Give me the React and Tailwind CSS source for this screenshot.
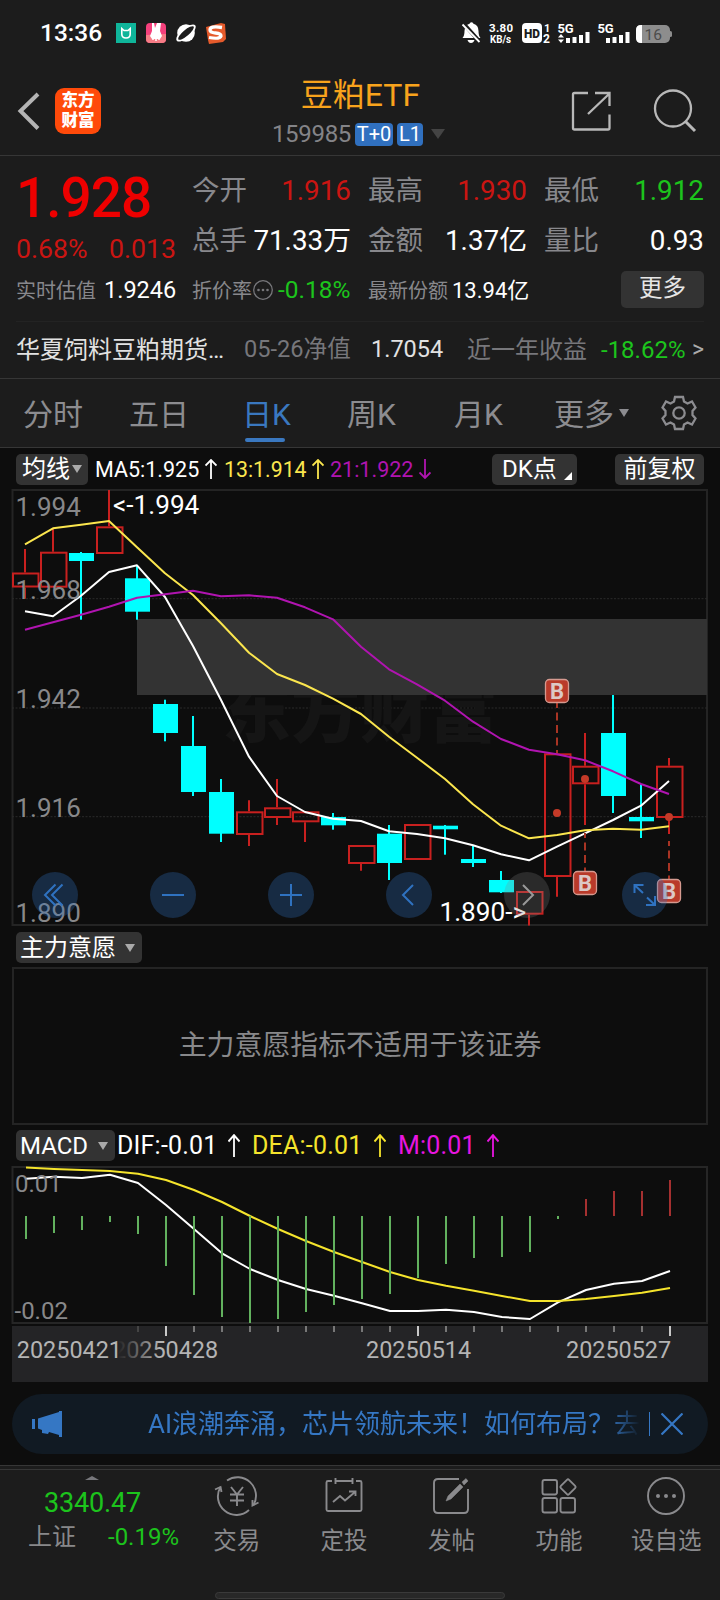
import React from 'react'

const UP = '#c8201f'
const DOWN = '#00ffff'

// [type, high, bodyTop, bodyBottom, low]
const CANDLES = [
  ['up', 549, 572.5, 587.5, 598.7],
  ['up', 528.5, 551.7, 587.7, 587.7],
  ['down', 552, 553, 561, 619.7],
  ['up', 490, 526.3, 554, 554],
  ['down', 565, 578.3, 611.7, 619.7],
  ['down', 699.7, 704, 733, 741.3],
  ['down', 716, 746, 792, 796],
  ['down', 779, 792, 833.7, 842],
  ['up', 800.3, 811.3, 835, 846],
  ['up', 779, 807.3, 818, 825],
  ['up', 811.3, 811.3, 822.3, 842],
  ['down', 813, 817, 825.3, 829.7],
  ['up', 845, 845, 864, 870.7],
  ['down', 825, 833.7, 863, 880],
  ['up', 824, 824, 860, 860],
  ['down', 825, 825.7, 829.3, 854.7],
  ['down', 845.7, 859, 863, 867],
  ['down', 871, 880, 892.3, 893],
  ['up', 891, 891, 914.7, 925.5],
  ['up', 750, 753.3, 877, 896.7],
  ['up', 733, 765.7, 784.3, 825],
  ['down', 695, 733, 796, 813],
  ['down', 784, 817, 821.3, 838],
  ['up', 758, 765.7, 818, 834],
]

const MA5 = [611.3, 616.3, 595.7, 572, 565.3, 597, 646, 700, 756.7, 796, 812, 818.7, 821, 831.3, 834, 838.3, 845.3, 854.3, 860.3, 846.7, 833.3, 820, 805.7, 781]
const MA13 = [544.3, 528.3, 524.7, 521, 547.3, 573.3, 595, 623.3, 652.7, 674, 685, 698.7, 714, 736.7, 757.7, 779, 804.3, 825.7, 838.3, 835, 830.3, 828.7, 829.7, 826.3]
const MA21 = [629.7, 622.3, 614.7, 606.7, 597.7, 594.3, 590.7, 596.3, 595.3, 597.7, 607.3, 619.3, 646.7, 669.3, 684.3, 700.7, 721.7, 739, 749.7, 754.3, 760.3, 771.3, 784, 794]

const MACD = [1239, 1233, 1230, 1222, 1234, 1266, 1295, 1317, 1323, 1319, 1312, 1305, 1299, 1294, 1278, 1264, 1258, 1257, 1252, 1219, 1199, 1191, 1191, 1180]
const DIF = [1178.7, 1176.7, 1178, 1174.7, 1183, 1205, 1229, 1253.3, 1269, 1280, 1289, 1295.7, 1303.3, 1311, 1311, 1309.7, 1312, 1317, 1319, 1302.3, 1290, 1283.7, 1281, 1271]
const DEA = [1167.5, 1169, 1170, 1171, 1173.7, 1180, 1190, 1202, 1216, 1229, 1241, 1252, 1262, 1272, 1280, 1285.7, 1290.7, 1296, 1301, 1301, 1299, 1296, 1292.7, 1288]

const line = (ys, x0) => ys.map((y, i) => `${x0 + i * 28},${y}`).join(' ')

function Caret({ className }) {
  return (
    <svg viewBox="0 0 10 8" preserveAspectRatio="none" className={className} fill="currentColor">
      <path d="M0 0h10L5 8z" />
    </svg>
  )
}

function Arrow({ down, className }) {
  return (
    <svg viewBox="0 1 12 20" preserveAspectRatio="none" className={className} fill="none" stroke="currentColor" strokeWidth="1.8">
      <path d={down ? 'M6 1v19M.5 14.500l5.500 5.500 5.500-5.500' : 'M6 21V2M.5 7.500L6 2l5.500 5.500'} />
    </svg>
  )
}

function StatusBar() {
  return (
    <div className="flex h-[66px] shrink-0 items-center pl-[40px] pr-[48px] text-white">
      <span className="w-[76px] pt-px text-[24.5px] font-medium leading-none">13:36</span>
      <svg width="112" height="22" viewBox="0 0 112 22">
        <rect y="1" width="20" height="20" fill="#0fb59a" />
        <path d="M5.800 6.500v5.500q0 4 4.200 4t4.200-4v-5.500l-2.200 2h-4z" fill="none" stroke="#fff" strokeWidth="1.600" />
        <rect x="30" y="1" width="20" height="20" rx="4" fill="#f5407c" />
        <path d="M30 13l20-1v5q0 4-4 4H34q-4 0-4-4z" fill="#f77c86" />
        <path d="M36 1h2l1 5 2-5h4l-1 8 2 5-2 3h-8l-2-3 2-5z" fill="#fff" />
        <path d="M37 16v2M40 16v3M43 16v2" stroke="#fff" strokeWidth="1.500" />
        <circle cx="70" cy="11" r="8.800" fill="#fff" />
        <ellipse cx="70" cy="11" rx="12" ry="4.800" fill="#fff" transform="rotate(-40 70 11)" />
        <ellipse cx="70" cy="11" rx="10" ry="3" fill="#1c1c1c" transform="rotate(-40 70 11)" />
        <path d="M90 5l15-4 4 1 1 15-3 3-14 2-1-4z" fill="#e55a2b" />
        <path d="M106 5.500q-12-2-12 2.500 0 2.500 5.500 3t5.500 3q-1 3.500-12 1.500" fill="none" stroke="#fff" strokeWidth="3.300" />
      </svg>
      <svg className="ml-auto" width="212" height="24" viewBox="460 21 212 24" fill="#fff">
        <path d="M464 38q2-2 2-7 0-6 5-7.300Q473 21 475 23.700q5 1.300 5 7.300 0 5 2 7zM469 40h7q-1 3-3.500 3T469 40z" transform="translate(-1.500 0)" />
        <path d="M463 23l17 19" stroke="#1c1c1c" strokeWidth="4" />
        <path d="M462.500 24.500l17 17.500" stroke="#fff" strokeWidth="1.800" />
        <g fontFamily="Roboto" fontWeight="700">
          <text x="489" y="32" fontSize="11.500" textLength="24">3.80</text>
          <text x="490" y="42.500" fontSize="10" textLength="21" lengthAdjust="spacingAndGlyphs">KB/s</text>
          <rect x="522" y="23" width="20" height="20" rx="4" />
          <text x="524" y="38" fontSize="13.500" textLength="16" lengthAdjust="spacingAndGlyphs" fill="#1c1c1c" fontWeight="900">HD</text>
          <text x="544" y="31.500" fontSize="11">1</text>
          <text x="543" y="43" fontSize="12">2</text>
          <text x="557.500" y="32.500" fontSize="13" textLength="16">5G</text>
          <text x="597.500" y="32.500" fontSize="13" textLength="16">5G</text>
        </g>
        <path d="M558 37.500l3-3.500 3 3.500zM558 39.500l3 3.500 3-3.500z" />
        <path d="M566 38h4v5h-4zM572.500 37h4v6h-4zM579 35h4v8h-4zM585.500 32h4v11h-4z" />
        <path d="M606 38h4v5h-4zM612.500 37h4v6h-4zM619 35h4v8h-4zM625.500 32h4v11h-4z" />
        <rect x="636" y="25" width="34" height="18" rx="5" fill="#8d8d8d" />
        <path d="M641 25h1v18h-1q-5 0-5-5v-8q0-5 5-5z" />
        <rect x="669" y="31" width="3" height="6" rx="1.500" fill="#8d8d8d" />
        <text x="644.500" y="40" fontFamily="Roboto" fontSize="15.500" fill="#4c4c4c">16</text>
      </svg>
    </div>
  )
}

function Header() {
  return (
    <header className="flex h-[90px] shrink-0 border-b border-[#363636] pl-[17px] pr-[22px]">
      <svg className="mt-[26px]" width="24" height="38" viewBox="0 0 24 38" fill="none" stroke="#b4b4b4" strokeWidth="4">
        <path d="M21 2L3.500 19 21 36.500" />
      </svg>
      <div className="ml-[14px] mt-[22px] h-[46px] w-[46px] rounded-[9px] bg-[#ff4a0a] pt-[3px] text-center text-[16.5px] font-black leading-[19.5px] text-white">
        东方<br />财富
      </div>
      <div className="flex w-[519px] flex-col items-center">
        <h1 className="mt-[12px] text-[32px] leading-[34px] text-[#f8a31c]">豆粕ETF</h1>
        <div className="-ml-[4px] mt-[10px] flex items-center text-[24px] leading-[24px] text-[#848488]">
          <span className="tracking-[-0.3px]">159985</span>
          <span className="ml-[4px] flex h-[23px] w-[38px] items-center justify-center rounded-[4px] bg-[#3070bf] text-[20px] text-white">T+0</span>
          <span className="ml-[4px] flex h-[23px] w-[26px] items-center justify-center rounded-[4px] bg-[#3070bf] text-[20px] text-white">L1</span>
          <Caret className="ml-[8px] h-[10px] w-[14px] text-[#444]" />
        </div>
      </div>
      <svg className="-ml-[52px] mt-[22px] shrink-0" width="130" height="46" viewBox="568 88 130 46" fill="none" stroke="#b8b8b8" strokeWidth="2.3">
        <path d="M588 93h-13.500q-1.500 0-1.500 1.500V128q0 1.500 1.500 1.500H608q1.500 0 1.500-1.500v-13.500M595 93h14.500v13M609 94l-21 20" />
        <circle cx="673" cy="108.500" r="18" />
        <path d="M685 121l10 10" strokeWidth="3" />
      </svg>
    </header>
  )
}

function Stat({ label, value, color = 'text-white' }) {
  return (
    <div className="flex items-center justify-between whitespace-nowrap">
      <span className="text-[27.500px] text-[#88888c]">{label}</span>
      <span className={`text-[27.800px] ${color}`}>{value}</span>
    </div>
  )
}

function Quote() {
  return (
    <section className="h-[223px] shrink-0 border-b border-[#363636] px-[16px] leading-none">
      <div className="flex h-[108px]">
        <div className="w-[176px]">
          <div className="flex h-[84px] items-center text-[55px] font-medium tracking-[-1px] text-[#ee0000]">1.928</div>
          <div className="-mt-[6px] flex h-[30px] items-center justify-between pr-[16px] text-[26.700px] text-[#cb1512]">
            <span>0.68%</span>
            <span>0.013</span>
          </div>
        </div>
        <div className="grid h-[100px] flex-1 grid-cols-[159px_159px_160px] grid-rows-[50px_50px] gap-x-[17px] pt-[10px]">
          <Stat label="今开" value="1.916" color="text-[#cb1512]" />
          <Stat label="最高" value="1.930" color="text-[#cb1512]" />
          <Stat label="最低" value="1.912" color="text-[#1cc41c]" />
          <Stat label="总手" value="71.33万" />
          <Stat label="金额" value="1.37亿" />
          <Stat label="量比" value="0.93" />
        </div>
      </div>
      <div className="flex h-[58px] items-center whitespace-nowrap border-b border-[#232323] pb-[4px] text-[24.500px] text-white">
        <span className="w-[88px] text-[20px] text-[#88888c]">实时估值</span>
        <span className="w-[88px] text-[23.500px]">1.9246</span>
        <span className="text-[20px] text-[#88888c]">折价率</span>
        <svg width="22" height="22" viewBox="0 0 22 22" fill="#77777b">
          <circle cx="11" cy="10" r="9.300" fill="none" stroke="#77777b" strokeWidth="1.300" />
          <circle cx="6.500" cy="10" r="1.300" />
          <circle cx="11" cy="10" r="1.300" />
          <circle cx="15.500" cy="10" r="1.300" />
        </svg>
        <span className="ml-[4px] w-[90px] text-[#1cc41c]">-0.18%</span>
        <span className="w-[84px] text-[20px] text-[#88888c]">最新份额</span>
        <span className="text-[22px]">13.94亿</span>
        <button className="mb-[3px] ml-auto h-[37px] w-[83px] rounded-[5px] bg-[#333] text-[23.500px] text-[#e6e6e6]">更多</button>
      </div>
      <div className="flex h-[55px] items-center whitespace-nowrap text-[24px] text-[#e2e2e2]">
        <span className="w-[228px]">华夏饲料豆粕期货…</span>
        <span className="w-[127px] text-[23.600px] text-[#77777b]">05-26净值</span>
        <span className="w-[96px] text-[23.500px]">1.7054</span>
        <span className="w-[134px] text-[#77777b]">近一年收益</span>
        <span className="text-[#1cc41c]">-18.62%</span>
        <span className="ml-auto text-[23px] text-[#aaa]">&gt;</span>
      </div>
    </section>
  )
}

function Tabs() {
  return (
    <nav className="flex h-[69px] shrink-0 items-center whitespace-nowrap border-b border-[#363636] pl-[23px] text-[30px] leading-none text-[#8c8c90]">
      <span className="w-[106px] pt-[4px]">分时</span>
      <span className="w-[113px] pt-[4px]">五日</span>
      <span className="flex h-full w-[105px] flex-col pt-[21px] text-[#3a78c0]">
        日K
        <i className="ml-[3px] mt-[8px] h-[4px] w-[40px] rounded-full bg-[#3a78c0]" />
      </span>
      <span className="w-[107px] pt-[4px]">周K</span>
      <span className="w-[100px] pt-[4px]">月K</span>
      <span className="w-[59px] pt-[4px]">更多</span>
      <Caret className="ml-[6px] h-[8px] w-[10px]" />
      <svg className="ml-[32px]" width="36" height="36" viewBox="-18 -18 36 36" fill="none" stroke="#8c8c90" strokeWidth="2.300">
        <path d="M-4-16h8l1 4.500 3.500 2 4.500-2 3.500 6-3 3.500v4l3 3.500-3.500 6-4.500-2-3.500 2-1 4.500h-8l-1-4.500-3.500-2-4.500 2-3.500-6 3-3.500v-4l-3-3.500 3.500-6 4.500 2 3.500-2z" />
        <circle r="5.700" />
      </svg>
    </nav>
  )
}

function Badge({ x, y }) {
  return (
    <g>
      <rect x={x - 11.5} y={y - 11.5} width="23" height="23" rx="4" fill="#b93a2a" stroke="#d59a90" strokeWidth="1.300" />
      <text x={x} y={y + 8} textAnchor="middle" fontSize="22" fontWeight="700" fill="#dcc8c6">B</text>
    </g>
  )
}

function KChart() {
  return (
    <svg className="block shrink-0" width="720" height="441" viewBox="0 487 720 441" fontFamily="Roboto">
      <rect x="12.500" y="490" width="694.500" height="435" fill="none" stroke="#242424" strokeWidth="2" />
      {[598.7, 708, 816.7].map((y) => (
        <path key={y} d={`M12 ${y}H708`} stroke="#2a2a2a" strokeDasharray="2 1.500" />
      ))}
      <text x="222" y="737" fontSize="69" fontWeight="900" fill="#151515" fontFamily="'Noto Sans CJK SC', sans-serif">东方财富</text>
      <path d="M137 619h570v76H137z" fill="#333" />
      {CANDLES.map(([type, high, top, bottom, low], i) => {
        const x = 25 + i * 28
        return type === 'up' ? (
          <g key={x} fill="none" stroke={UP} strokeWidth="2">
            <path d={`M${x} ${high}V${top}M${x} ${bottom}V${low}`} />
            <rect x={x - 12} y={top + 1} width="25.500" height={bottom - top - 2} />
          </g>
        ) : (
          <g key={x} fill={DOWN}>
            <rect x={x - 1} y={high} width="2" height={low - high} />
            <rect x={x - 12} y={top} width="25" height={bottom - top} />
          </g>
        )
      })}
      <g fill="none" strokeWidth="2" strokeLinejoin="round">
        <polyline points={line(MA5, 25)} stroke="#fff" />
        <polyline points={line(MA13, 25)} stroke="#fbe64e" />
        <polyline points={line(MA21, 25)} stroke="#b014b0" />
      </g>
      <path d="M557 703V753M585 833V872M669 841V879" stroke="#a93424" strokeWidth="2" strokeDasharray="8 4.500" strokeDashoffset="3" />
      <g fill="#c43a28">
        <circle cx="557" cy="813" r="4" />
        <circle cx="585" cy="779" r="4" />
        <circle cx="669" cy="817" r="4" />
      </g>
      <Badge x={557} y={691} />
      <Badge x={585} y={883} />
      <Badge x={669} y={891} />
      <g fontSize="26" fill="#88888a">
        <text x="15.500" y="516">1.994</text>
        <text x="15.500" y="599">1.968</text>
        <text x="15.500" y="708">1.942</text>
        <text x="15.500" y="817">1.916</text>
        <text x="15.500" y="922">1.890</text>
      </g>
      <g fontSize="26.200" fill="#fff">
        <text x="113" y="514">&lt;-1.994</text>
        <text x="439.500" y="920.700">1.890-&gt;</text>
      </g>
      {[55, 173, 291, 409, 645].map((x) => (
        <circle key={x} cx={x} cy="895" r="23" fill="#2f72c0" fillOpacity="0.300" />
      ))}
      <circle cx="527" cy="895" r="23" fill="#828282" fillOpacity="0.250" />
      <g fill="none" stroke="#2f72c0" strokeWidth="2">
        <path d="M55.500 884.500L45 895l10.500 10.500M62.500 884.500L52 895l10.500 10.500" />
        <path d="M162 895h22M280 895h22M291 884v22" />
        <path d="M413 885l-10 10 10 10" />
        <path d="M634.500 893v-8h9M635 885.500l8 7.500M655 896v9h-9M655 905l-8-7.500" />
        <path d="M523 885l10 10-10 10" stroke="#999" />
      </g>
    </svg>
  )
}

function MacdChart() {
  return (
    <svg className="block shrink-0" width="720" height="218" viewBox="0 1165 720 218" fontFamily="Roboto">
      <defs>
        <linearGradient id="dateFade" gradientUnits="userSpaceOnUse" x1="118" x2="160" y1="0" y2="0">
          <stop offset="0" stopColor="#b4b4b4" stopOpacity="0" />
          <stop offset="1" stopColor="#b4b4b4" />
        </linearGradient>
      </defs>
      <rect x="12.500" y="1167" width="694.500" height="156" fill="none" stroke="#262626" strokeWidth="2" />
      <g fill="none" strokeWidth="2" strokeLinejoin="round">
        <polyline points={line(DIF, 26)} stroke="#fff" />
        <polyline points={line(DEA, 26)} stroke="#f5e42c" />
      </g>
      {MACD.map((y, i) => (
        <path key={i} d={`M${26 + i * 28} 1216V${y}`} stroke={y > 1216 ? '#62b15e' : '#a53030'} strokeWidth="2" />
      ))}
      <g fontSize="24" fill="#88888a">
        <text x="15" y="1191.700">0.01</text>
        <text x="14.500" y="1319">-0.02</text>
      </g>
      <path d="M12 1326h696v56H12z" fill="#242426" />
      {MACD.map((_, i) => {
        if (i < 4) return null
        const major = i === 5 || i === 14 || i === 23
        return (
          <path key={i} d={`M${26 + i * 28} 1326v${major ? 10 : 6}`} stroke={major ? '#c8c8c8' : i === 4 ? '#444' : '#777'} strokeWidth="2" />
        )
      })}
      <g fontSize="23.400" fill="#b4b4b4">
        <text x="16.800" y="1357.700">20250421</text>
        <text x="113" y="1357.700" fill="url(#dateFade)">20250428</text>
        <text x="366" y="1357.700">20250514</text>
        <text x="566" y="1357.700">20250527</text>
      </g>
    </svg>
  )
}

function Charts() {
  return (
    <section className="flex h-[935px] shrink-0 flex-col bg-[#0d0d0d] leading-none text-white">
      <div className="flex h-[39px] items-center whitespace-nowrap px-[16px] pt-[3px] text-[21.500px]">
        <div className="flex h-[31px] w-[72px] items-center rounded-[5px] bg-[#333] pl-[6px] text-[24px]">
          均线
          <Caret className="ml-[2px] h-[8px] w-[10px] shrink-0 text-[#aaa]" />
        </div>
        <span className="ml-[7px] w-[109.500px] pt-px">MA5:1.925</span>
        <Arrow className="h-[20px] w-[12px]" />
        <span className="ml-[7.500px] w-[88px] pt-px text-[21.300px] text-[#fbe64e]">13:1.914</span>
        <Arrow className="h-[20px] w-[12px] text-[#fbe64e]" />
        <span className="ml-[6px] w-[89px] pt-px text-[#b014b0]">21:1.922</span>
        <Arrow down className="h-[20px] w-[12px] text-[#b014b0]" />
        <div className="ml-auto flex h-[31px] w-[85px] items-center rounded-[5px] bg-[#333] pl-[10px] text-[24px]">
          DK点
          <svg className="ml-[6px] mt-[14px] shrink-0" width="9" height="8" viewBox="0 0 9 8"><path d="M9 0v8H1z" fill="#fff" /></svg>
        </div>
        <div className="ml-[38px] flex h-[31px] w-[89px] items-center justify-center rounded-[5px] bg-[#333] text-[24px]">前复权</div>
      </div>
      <KChart />
      <div className="flex h-[39px] shrink-0 items-center pl-[16px]">
        <div className="flex h-[31px] w-[126px] items-center rounded-[5px] bg-[#333] pl-[4px] text-[24px]">
          主力意愿
          <Caret className="ml-[9px] h-[8px] w-[10px] text-[#aaa]" />
        </div>
      </div>
      <div className="mx-[12px] flex h-[158px] shrink-0 items-center justify-center border-2 border-[#242424] text-[27.900px] text-[#88888a]">
        主力意愿指标不适用于该证券
      </div>
      <div className="flex h-[40px] shrink-0 items-center whitespace-nowrap pl-[16px] pt-[1px] text-[25px] tracking-[0.2px]">
        <div className="flex h-[31px] w-[99px] items-center rounded-[5px] bg-[#333] pl-[4px] text-[24px] tracking-normal">
          MACD
          <Caret className="ml-[10px] h-[8px] w-[10px] text-[#aaa]" />
        </div>
        <span className="ml-[2px] w-[111px]">DIF:-0.01</span>
        <Arrow className="h-[23px] w-[12px]" />
        <span className="ml-[12px] w-[122px] text-[#f5e42c]">DEA:-0.01</span>
        <Arrow className="h-[23px] w-[12px] text-[#f5e42c]" />
        <span className="ml-[12px] w-[89px] text-[#e815e0]">M:0.01</span>
        <Arrow className="h-[23px] w-[12px] text-[#e815e0]" />
      </div>
      <MacdChart />
    </section>
  )
}

function Banner() {
  return (
    <div className="h-[82px] shrink-0 bg-[#0d0d0d] px-[12px] pt-[11px]">
      <div className="flex h-[60px] items-center rounded-full bg-[#111a23] pl-[20px] text-[26px] leading-none text-[#3577c4]">
        <svg className="shrink-0" width="30" height="28" viewBox="0 0 30 28" fill="currentColor">
          <path d="M0 9h3v10H0zM6 8.500L27 2V1h3v26h-3v-2l-10-3-1 2-6-1v-3l-4-1.500z" />
        </svg>
        <span className="ml-[86px] w-[500px] shrink-0 whitespace-nowrap leading-[34px] [mask-image:linear-gradient(to_right,#000_460px,transparent_492px)]">
          AI浪潮奔涌，芯片领航未来！如何布局？去
        </span>
        <i className="ml-[1px] h-[24px] w-px shrink-0 bg-[#3577c4]" />
        <svg className="ml-[11px] shrink-0" width="22" height="22" viewBox="0 0 22 22" stroke="currentColor" strokeWidth="2.200">
          <path d="M.5.5l21 21M21.500.5l-21 21" />
        </svg>
      </div>
    </div>
  )
}

const NAV = [
  {
    label: '交易',
    icon: (
      <>
        <path d="M-10-15.500A18.500 18.500 0 0 1 16.500 9M-16.500-9A18.500 18.500 0 0 0 12 14" />
        <path d="M-22-6.500l5.500-2.500 1 5M15.500 4v5.500l6-3" />
        <path d="M-6-9l6 7.500L6-9M0-1.500V10M-7-1.500H7M-7 4.500H7" />
      </>
    ),
  },
  {
    label: '定投',
    icon: (
      <>
        <path d="M-12-15h-4q-1.500 0-1.500 1.500v27q0 1.500 1.500 1.500h32q1.500 0 1.500-1.500v-27Q17.500-15 16-15h-4M-8-15H8M-8.500-18v6M8.500-18v6" />
        <path d="M-11 6l7-6 5 4.500L11-4M5-4.500h6.500V0" />
      </>
    ),
  },
  {
    label: '发帖',
    icon: (
      <>
        <path d="M8-17h-21q-4 0-4 4v26q0 4 4 4h26q4 0 4-4V-7" />
        <path d="M-5 5l2-5L9-12l3 3L0 3zM11-14l4-3.500L17-15l-4 4z" fill="currentColor" strokeWidth="0.500" />
      </>
    ),
  },
  {
    label: '功能',
    icon: (
      <>
        <rect x="-16.500" y="-16" width="14.500" height="14.500" rx="2" />
        <rect x="-16.500" y="2" width="14.500" height="14.500" rx="2" />
        <rect x="1.500" y="2" width="14.500" height="14.500" rx="2" />
        <rect x="-5.800" y="-5.800" width="11.600" height="11.600" rx="1.500" transform="translate(9 -9) rotate(45)" />
      </>
    ),
  },
  {
    label: '设自选',
    icon: (
      <>
        <circle r="18" />
        <g fill="currentColor" stroke="none">
          <circle cx="-8" r="2" />
          <circle r="2" />
          <circle cx="8" r="2" />
        </g>
      </>
    ),
  },
]

function BottomNav() {
  return (
    <footer className="flex flex-1 flex-col border-t border-[#363636] leading-none">
      <div className="mt-[3px] flex h-[123px] border-t border-[#363636]">
        <div className="w-[183px] text-[#1cc41c]">
          <Caret className="ml-[85px] mt-[6px] h-[4px] w-[14px] rotate-180 text-[#77777b]" />
          <div className="mt-[10px] pl-[2px] text-center text-[27px] leading-[27px] tracking-[-0.2px]">3340.47</div>
          <div className="mt-[5px] flex items-center pl-[28px] text-[24px] leading-[30px]">
            <span className="w-[80px] text-[#88888a]">上证</span>
            -0.19%
          </div>
        </div>
        <div className="grid flex-1 grid-cols-5">
          {NAV.map(({ label, icon }) => (
            <div key={label} className="flex flex-col items-center pt-[4px] text-[23.500px] text-[#8a8a8d]">
              <svg width="46" height="44" viewBox="-23 -22 46 44" fill="none" stroke="currentColor" strokeWidth="1.900">{icon}</svg>
              <span className="mt-[11px] leading-[24px]">{label}</span>
            </div>
          ))}
        </div>
      </div>
      <div className="mx-auto h-[7px] w-[290px] rounded-full border border-[#3a3a3a] bg-[#282828]" />
    </footer>
  )
}

export default function App() {
  return (
    <div className="flex h-[1600px] w-[720px] flex-col overflow-hidden bg-[#1c1c1c] font-[Roboto,'Noto_Sans_CJK_SC',sans-serif]">
      <StatusBar />
      <Header />
      <Quote />
      <Tabs />
      <Charts />
      <Banner />
      <BottomNav />
    </div>
  )
}
